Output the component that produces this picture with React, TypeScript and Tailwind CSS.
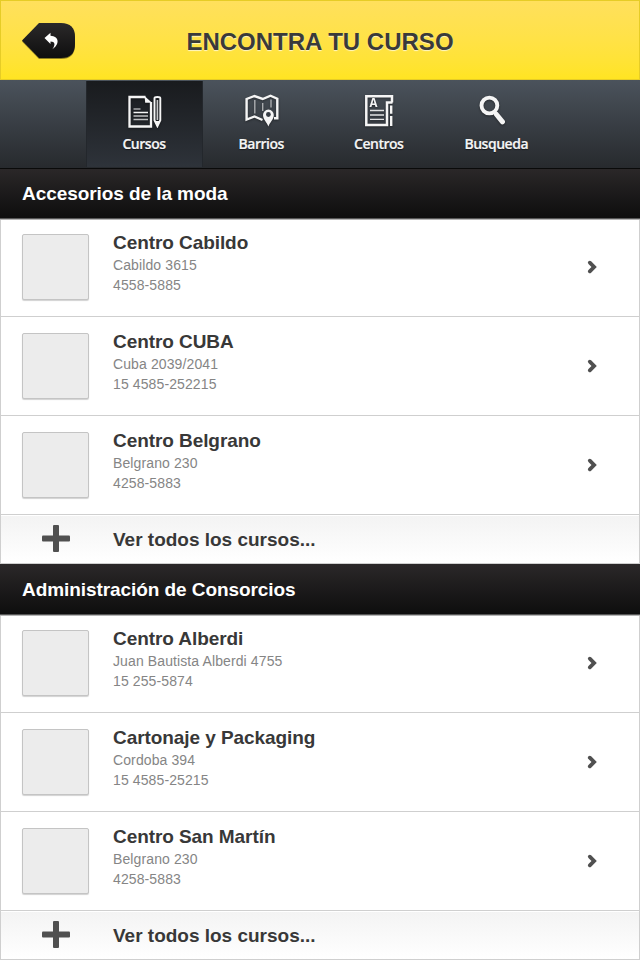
import type { ReactNode } from "react";

type Course = { name: string; address: string; phone: string };

const fashion: Course[] = [
  { name: "Centro Cabildo", address: "Cabildo 3615", phone: "4558-5885" },
  { name: "Centro CUBA", address: "Cuba 2039/2041", phone: "15 4585-252215" },
  { name: "Centro Belgrano", address: "Belgrano 230", phone: "4258-5883" },
];

const administration: Course[] = [
  { name: "Centro Alberdi", address: "Juan Bautista Alberdi 4755", phone: "15 255-5874" },
  { name: "Cartonaje y Packaging", address: "Cordoba 394", phone: "15 4585-25215" },
  { name: "Centro San Martín", address: "Belgrano 230", phone: "4258-5883" },
];

function CoursesIcon() {
  return (
    <svg width="34" height="34" viewBox="0 0 34 34" fill="none" stroke="#f5f5f5">
      <path d="M17.500 3H1.500v29.500h21.500V8" strokeWidth="2.300" />
      <path d="M16.500 2L24 8.800H17.200z" fill="#f5f5f5" stroke="none" />
      <path d="M5.500 15h7" strokeWidth="1.200" opacity=".8" />
      <path d="M5.500 18.500h14.500" strokeWidth="1.500" />
      <path d="M5.500 22h14.500M5.500 25.500h14.500" strokeWidth="1.300" opacity=".75" />
      <path d="M26.500 4.200q0-1.200 2.900-1.200t2.900 1.200v22l-2.900 6-2.900-6z" strokeWidth="1.900" />
      <path d="M29.400 6v20" strokeWidth="1.600" opacity=".8" />
      <path d="M26.600 27h5.600l-2.800 6z" fill="#f5f5f5" stroke="none" />
    </svg>
  );
}

function DistrictsIcon() {
  return (
    <svg width="34" height="34" viewBox="0 0 34 34" fill="none" stroke="#f5f5f5">
      <path d="M17.500 26L9.500 22.500 1.600 25.500V5L9.500 2l8.200 3L25.500 1.700l6.800 3V24.200h-3.300" strokeWidth="2.400" />
      <path d="M9.800 6v13.500M17.700 9v8M26 5.500v8" strokeWidth="1.400" opacity=".6" />
      <path
        d="M23.400 32.500c-1.500-4.200-5.400-7-5.400-11.500a5.400 5.400 0 0 1 10.800 0c0 4.500-3.900 7.300-5.400 11.500z"
        fill="#f5f5f5"
        stroke="none"
      />
      <circle cx="23.400" cy="20.500" r="2.400" fill="#373d45" stroke="none" />
    </svg>
  );
}

function CentersIcon() {
  return (
    <svg width="30" height="34" viewBox="0 0 30 34" fill="none" stroke="#f5f5f5">
      <path d="M28 8.500V2.300H2.300v28.600h20.700V8.600h5.500" strokeWidth="2.500" />
      <path d="M27.200 11.500v8.300M27.200 22v10" strokeWidth="2.400" />
      <path d="M6 16.500h14M6 21h14M6 25.400h14" strokeWidth="1.400" opacity=".9" />
      <text
        x="5.500"
        y="13"
        fill="#f5f5f5"
        stroke="none"
        className="font-['Open_Sans',sans-serif] text-[11.500px] font-bold"
      >
        A
      </text>
    </svg>
  );
}

function SearchIcon() {
  return (
    <svg width="36" height="34" viewBox="0 0 36 34" fill="none" stroke="#f5f5f5">
      <circle cx="10.400" cy="11.500" r="7.900" strokeWidth="3.900" />
      <path d="M17.500 20.500l6 7.300" strokeWidth="5" strokeLinecap="round" />
      <path d="M14.800 17.500l2 2.400" strokeWidth="3.400" />
    </svg>
  );
}

function Tab({ label, icon, active }: { label: string; icon: ReactNode; active?: boolean }) {
  return (
    <button
      className={
        active
          ? "mt-px flex h-[86px] w-[117px] flex-col items-center border-x border-[#23272c] bg-linear-to-b from-[#191b1e] to-[#2e333a]"
          : "mt-px flex h-[86px] w-[117.500px] flex-col items-center"
      }
    >
      <span className="mt-[13px] flex h-[34px] drop-shadow-[0_1px_1px_rgba(0,0,0,0.4)]">{icon}</span>
      <span className="mt-[6px] mr-px font-['Open_Sans',sans-serif] text-[14px] leading-[20px] font-semibold tracking-[-0.480px] text-[#f5f5f5] [-webkit-text-stroke:0.200px_#f5f5f5] [text-shadow:0_1px_1px_rgba(0,0,0,0.5)]">
        {label}
      </span>
    </button>
  );
}

function CourseRow({ name, address, phone }: Course) {
  return (
    <li className="flex h-[99px] items-start border-x border-b border-[#cfcfcf] bg-white pl-[21px]">
      <div className="mt-4 h-[66px] w-[67px] rounded-[2px] border border-[#c4c4c4] bg-[#ececec] shadow-[0_1px_1px_rgba(0,0,0,0.18)]" />
      <div className="ml-6 flex-1 pt-[13px]">
        <h3 className="text-[19px] leading-[24px] font-bold tracking-[-0.070px] text-[#383838]">{name}</h3>
        <p className="text-[14px] leading-[20px] tracking-[0.110px] text-[#858585]">{address}</p>
        <p className="text-[14px] leading-[20px] tracking-[0.110px] text-[#858585]">{phone}</p>
      </div>
      <svg className="mt-[42px] mr-[42px]" width="10" height="14" viewBox="0 0 10 14" fill="none">
        <path d="M2.800 2.700L7.100 7 2.800 11.300" stroke="#505050" strokeWidth="3.800" strokeLinecap="round" />
      </svg>
    </li>
  );
}

function Section({ title, courses }: { title: string; courses: Course[] }) {
  return (
    <section>
      <h2 className="relative flex h-[50px] items-center bg-linear-to-b from-[#2b2829] to-[#0e0e0e] pt-[2px] pl-[22px] text-[19px] font-bold tracking-[-0.070px] text-white shadow-[0_1px_0_#555,0_2px_0_#b5b5b5]">
        {title}
      </h2>
      <ul>
        {courses.map((course) => (
          <CourseRow key={course.name} {...course} />
        ))}
      </ul>
      <button className="flex h-[49px] w-full items-center border-x border-b border-[#cfcfcf] bg-linear-to-b from-[#f3f3f3] to-white pl-[41px] shadow-[inset_0_1px_0_#fff]">
        <svg width="28" height="28" viewBox="0 0 28 28" fill="#505050">
          <rect x="11" y="0" width="6" height="27" rx="1" />
          <rect x="0" y="10.500" width="28" height="6" rx="1" />
        </svg>
        <span className="ml-[43px] pt-[2px] text-[19px] font-bold tracking-[-0.010px] text-[#383838]">
          Ver todos los cursos...
        </span>
      </button>
    </section>
  );
}

export default function App() {
  return (
    <main className="h-[960px] w-[640px] overflow-hidden bg-white font-['Liberation_Sans',Arial,sans-serif]">
      <header className="grid h-20 grid-cols-[1fr_auto_1fr] items-center border border-[#e6cc26] bg-linear-to-b from-[#ffe05c] to-[#ffe422]">
        <button className="ml-[21px] w-[54px] pt-[2px]" aria-label="Volver">
          <svg width="56" height="38" viewBox="0 0 56 38">
            <defs>
              <linearGradient id="back" x2="0" y2="1">
                <stop stopColor="#2b292a" />
                <stop offset="1" stopColor="#0e0e0e" />
              </linearGradient>
            </defs>
            <path d="M0 19.500L17 2h22q14 0 14 14v7q0 14-14 14H17z" fill="#000" opacity=".45" />
            <path d="M0 18.500L17 1h22q14 0 14 14v7q0 14-14 14H17z" fill="url(#back)" />
            <path d="M22.500 16L28.500 10.800v3c8.500.3 9.700 8.500 1.800 13.500 3.500-5 2.700-7.700-1.800-7.900V22z" fill="#fff" />
          </svg>
        </button>
        <h1 className="pt-[3px] text-[24px] leading-[28px] font-bold text-[#3a3a3a] [text-shadow:0_1px_1px_rgba(255,255,255,0.7)]">
          ENCONTRA TU CURSO
        </h1>
        <span />
      </header>
      <nav className="relative z-10 flex h-[88px] bg-linear-to-b from-[#4b535c] to-[#272a2e] pl-[86px] shadow-[0_1px_0_#0a0a0a]">
        <Tab label="Cursos" icon={<CoursesIcon />} active />
        <Tab label="Barrios" icon={<DistrictsIcon />} />
        <Tab label="Centros" icon={<CentersIcon />} />
        <Tab label="Busqueda" icon={<SearchIcon />} />
      </nav>
      <Section title="Accesorios de la moda" courses={fashion} />
      <Section title="Administración de Consorcios" courses={administration} />
    </main>
  );
}
